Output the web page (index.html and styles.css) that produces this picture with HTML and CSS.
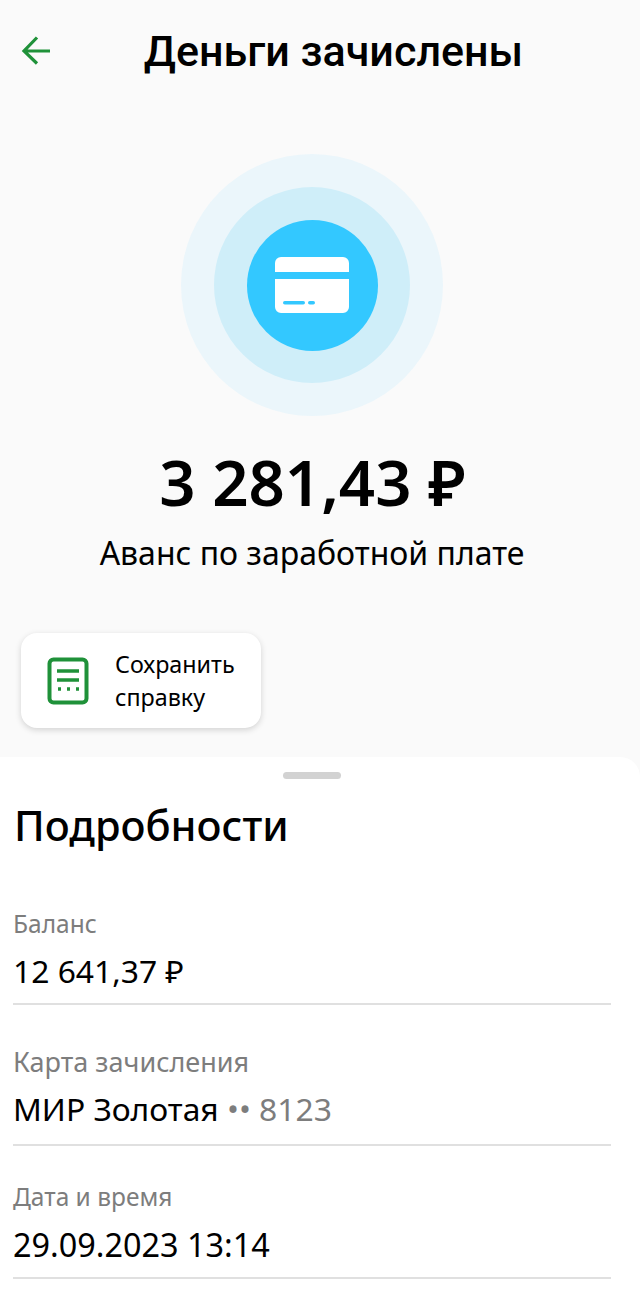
FILE: index.html
```html
<!DOCTYPE html>
<html lang="ru">
<head>
<meta charset="utf-8">
<title>Деньги зачислены</title>
<link rel="stylesheet" href="styles.css">
</head>
<body>
<main class="screen">
  <header class="topbar">
    <svg class="back" width="32" height="32" viewBox="0 0 32 32" fill="none"><path d="M17 3.500 4 17l13 12.500M4 17h26" stroke="#1f9139" stroke-width="3.200"/></svg>
    <h1 class="title">Деньги зачислены</h1>
  </header>
  <section class="hero">
    <div class="ring-outer"><div class="ring-mid"><div class="ring-inner">
      <svg width="74" height="56" viewBox="0 0 74 56"><path fill="#fff" d="M6 0h62a6 6 0 0 1 6 6v9H0V6a6 6 0 0 1 6-6ZM0 22h74v28a6 6 0 0 1-6 6H6a6 6 0 0 1-6-6Z"/><rect x="8" y="44" width="22" height="3.500" rx="1.750" fill="#33c8ff"/><rect x="33" y="44" width="7" height="3.500" rx="1.750" fill="#33c8ff"/></svg>
    </div></div></div>
    <div class="amount">3 281,43 ₽</div>
    <div class="purpose">Аванс по заработной плате</div>
  </section>
  <div class="actions">
    <div class="action">
      <svg width="42" height="48" viewBox="0 0 42 48" fill="none"><rect x="2.500" y="2.500" width="37" height="43" rx="4" stroke="#1f9139" stroke-width="4"/><path d="M10 14h22M10 23h22" stroke="#1f9139" stroke-width="3.500"/><path d="M11 32h3M20 32h3M29 32h3" stroke="#1f9139" stroke-width="3.500"/></svg>
      <span class="action-label">Сохранить<br>справку</span>
    </div>
  </div>
  <section class="sheet">
    <div class="handle"></div>
    <h2 class="sheet-title">Подробности</h2>
    <div class="row row-balance"><div class="label">Баланс</div><div class="value">12 641,37 ₽</div></div>
    <div class="row row-card"><div class="label label-large">Карта зачисления</div><div class="value">МИР Золотая <span class="muted">•• 8123</span></div></div>
    <div class="row row-date"><div class="label">Дата и время</div><div class="value value-date">29.09.2023 13:14</div></div>
  </section>
</main>
</body>
</html>
```
FILE: styles.css
```css
* { box-sizing: border-box; }
html, body { margin: 0; padding: 0; }
body { background: #fafafa; font-family: "Noto Sans", "Open Sans", sans-serif; color: #000; }
.screen { width: 640px; height: 1300px; overflow: hidden; display: flex; flex-direction: column; }
.topbar { height: 100px; position: relative; }
.back { position: absolute; left: 20px; top: 34px; }
.title { margin: 27px 0 0; padding-left: 27px; font: 500 43px/48px Roboto, sans-serif; text-align: center; }
.hero { display: flex; flex-direction: column; align-items: center; padding-right: 16px; padding-top: 54px; }
.ring-outer { width: 262px; height: 262px; border-radius: 50%; background: #ebf6fb; display: flex; align-items: center; justify-content: center; }
.ring-mid { width: 196px; height: 196px; border-radius: 50%; background: #cfeef9; display: flex; align-items: center; justify-content: center; }
.ring-inner { width: 131px; height: 131px; border-radius: 50%; background: #33c8ff; display: flex; align-items: center; justify-content: center; }
.amount { margin-top: 30px; font-size: 63.500px; line-height: 72px; font-weight: 600; margin-left: 1px; }
.purpose { margin-top: 14px; font-size: 32px; line-height: 42px; }
.actions { padding: 59px 0 0 21px; }
.action { width: 240px; height: 95px; background: #fff; border-radius: 16px; box-shadow: 0 2px 6px rgba(0,0,0,.16); display: flex; align-items: center; gap: 26px; padding-left: 26px; }
.action-label { font-size: 23.300px; line-height: 33px; }
.sheet { flex: 1; margin-top: 29px; background: #fff; border-radius: 0 20px 0 0; padding: 15px 29px 0 13px; }
.handle { width: 58px; height: 7px; background: #d2d2d2; border-radius: 4px; margin-left: 270px; }
.sheet-title { margin: 18px 0 0 1px; font-size: 41.500px; line-height: 56px; font-weight: 500; }
.row { border-bottom: 2px solid #e0e0e0; }
.row-balance { margin-top: 55px; height: 97px; }
.row-card { margin-top: 41px; height: 100px; }
.row-date { margin-top: 35px; height: 98px; }
.label { font-size: 24.500px; line-height: 32px; color: #7d7d7d; }
.label-large { font-size: 27px; }
.value { font-size: 31.800px; line-height: 44px; margin-top: 9px; }
.value-date { font-size: 32.400px; }
.muted { color: #7d7d7d; }
```
